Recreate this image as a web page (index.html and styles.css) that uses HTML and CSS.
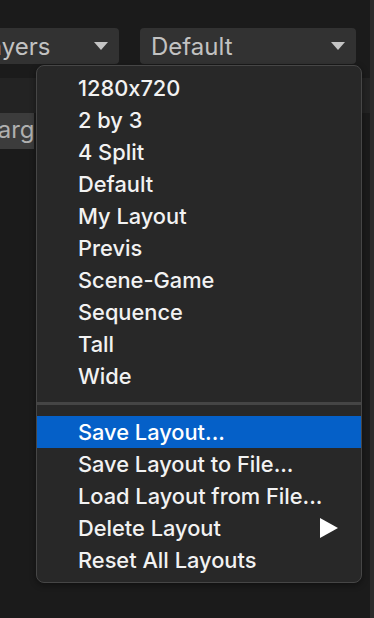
FILE: index.html
```html
<!DOCTYPE html>
<html>
<head>
<meta charset="utf-8">
<link rel="stylesheet" href="styles.css">
</head>
<body>
<div class="page">
  <div class="main">
    <div class="toolbar">
      <div class="dd dd-layers"><span class="dd-label">Layers</span><span class="caret"></span></div>
      <div class="dd dd-layout"><span class="dd-label">Default</span><span class="caret"></span></div>
    </div>
    <div class="band"></div>
    <div class="fieldrow"><div class="field"><span class="field-text">Target</span></div></div>
  </div>
  <div class="edge"></div>
</div>

<div class="menu">
  <div class="item">1280x720</div>
  <div class="item">2 by 3</div>
  <div class="item">4 Split</div>
  <div class="item">Default</div>
  <div class="item">My Layout</div>
  <div class="item">Previs</div>
  <div class="item">Scene-Game</div>
  <div class="item">Sequence</div>
  <div class="item">Tall</div>
  <div class="item">Wide</div>
  <div class="sep"></div>
  <div class="item active">Save Layout...</div>
  <div class="item">Save Layout to File...</div>
  <div class="item">Load Layout from File...</div>
  <div class="item sub">Delete Layout<svg class="arrow" width="18" height="20" viewBox="0 0 18 20"><polygon points="0,0 18,10 0,20" fill="#ffffff"/></svg></div>
  <div class="item">Reset All Layouts</div>
</div>
</body>
</html>
```

FILE: styles.css
```css
html, body {
  margin: 0;
  padding: 0;
  width: 374px;
  height: 618px;
  overflow: hidden;
  background: #1b1b1b;
  font-family: Inter, "Noto Sans", sans-serif;
  font-feature-settings: "calt" 0;
}
.page {
  display: flex;
  height: 618px;
}
.main {
  flex: 1;
  display: flex;
  flex-direction: column;
  overflow: hidden;
}
.edge {
  width: 4px;
  background: #2c2c2c;
}
.toolbar {
  height: 78px;
  box-sizing: border-box;
  padding-top: 28px;
  display: flex;
  gap: 21px;
  background: #1b1b1b;
}
.dd {
  height: 36px;
  background: #323232;
  border-radius: 4px;
  box-sizing: border-box;
  display: flex;
  align-items: center;
  justify-content: space-between;
  padding: 0 11px 0 11px;
  color: #c2c2c2;
  font-size: 24px;
  flex-shrink: 0;
}
.dd-layers {
  width: 155px;
  margin-left: -36px;
}
.dd-layout {
  width: 216px;
}
.caret {
  width: 0;
  height: 0;
  border-left: 7px solid transparent;
  border-right: 7px solid transparent;
  border-top: 8px solid #c4c4c4;
}
.band {
  height: 35px;
  background: #232323;
}
.fieldrow {
  height: 36px;
}
.field {
  width: 34px;
  height: 36px;
  background: #3c3c3c;
  color: #b0b0b0;
  font-size: 24px;
  line-height: 34px;
  overflow: hidden;
  white-space: nowrap;
}
.field-text {
  display: block;
  margin-left: -16px;
}
.menu {
  position: absolute;
  left: 36px;
  top: 65px;
  width: 326px;
  height: 518px;
  box-sizing: border-box;
  background: #282828;
  border: 1px solid #464646;
  border-radius: 8px;
  padding: 6px 0;
  box-shadow: 0 2px 6px rgba(0,0,0,0.4);
  overflow: hidden;
}
.item {
  height: 32px;
  line-height: 32px;
  padding-left: 41px;
  color: #f2f2f2;
  font-size: 21.8px;
  font-weight: 500;
  white-space: nowrap;
  display: flex;
  align-items: center;
  justify-content: space-between;
  padding-right: 23px;
}
.item.active {
  background: #0560c8;
  color: #ffffff;
}
.sep {
  height: 3px;
  margin: 10px 0 11px;
  background: #454545;
}
.arrow {
  display: block;
}
```
